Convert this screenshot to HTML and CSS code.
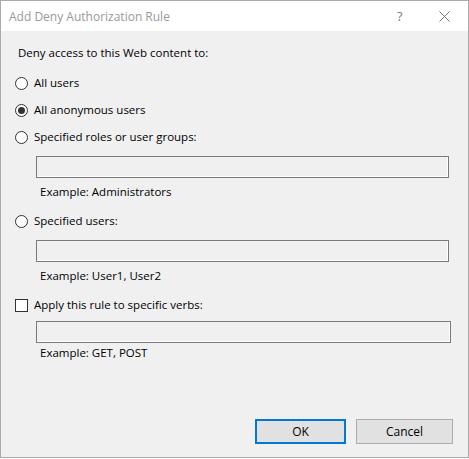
FILE: index.html
```html
<!DOCTYPE html>
<html lang="en">
<head>
    <meta charset="UTF-8">
    <title>Add Deny Authorization Rule</title>
    <link rel="stylesheet" href="styles.css">
</head>
<body>
<div class="dialog">
    <div class="titlebar">
        <span class="title">Add Deny Authorization Rule</span>
        <span class="help">?</span>
        <span class="close">
            <svg width="11" height="11" viewBox="0 0 11 11"><path d="M0.5 0.5L10.5 10.5M10.5 0.5L0.5 10.5" stroke="#777" stroke-width="1" fill="none"/></svg>
        </span>
    </div>
    <div class="content">
        <div class="intro">Deny access to this Web content to:</div>

        <label class="option first"><input type="radio" name="who"><span>All users</span></label>
        <label class="option"><input type="radio" name="who" checked><span>All anonymous users</span></label>
        <label class="option"><input type="radio" name="who"><span>Specified roles or user groups:</span></label>
        <input type="text" class="field" disabled>
        <div class="hint">Example: Administrators</div>

        <label class="option second"><input type="radio" name="who"><span>Specified users:</span></label>
        <input type="text" class="field" disabled>
        <div class="hint">Example: User1, User2</div>

        <label class="option second"><input type="checkbox" id="verbs"><span>Apply this rule to specific verbs:</span></label>
        <input type="text" class="field wide verbs" disabled>
        <div class="hint tight">Example: GET, POST</div>
    </div>
    <div class="buttons">
        <button class="btn ok">OK</button>
        <button class="btn cancel">Cancel</button>
    </div>
</div>
</body>
</html>
```

FILE: styles.css
```css
body{
    margin: 0;
    font-family: "Open Sans", "Noto Sans", sans-serif;
    font-size: 11.5px;
    color: #000;
    background: #fff;
}
.dialog{
    box-sizing: border-box;
    width: 469px;
    height: 458px;
    border: 1px solid #aaa;
    background: #f0f0f0;
    display: flex;
    flex-direction: column;
}
.titlebar{
    height: 30px;
    background: #fff;
    display: flex;
    align-items: center;
    padding-left: 8px;
    color: #999;
    font-size: 12px;
}
.title{
    flex: 1;
}
.help{
    width: 12px;
    margin-right: 30px;
    font-size: 13px;
    color: #777;
}
.close{
    width: 11px;
    height: 11px;
    margin-right: 18px;
    display: flex;
}
.content{
    padding: 14px 0 0 14px;
    display: flex;
    flex-direction: column;
    line-height: 16px;
}
.intro{
    padding-left: 3px;
}
.option{
    display: flex;
    align-items: center;
    height: 16px;
    margin-top: 11px;
}
.option.first{
    margin-top: 14px;
}
.option + .option{
    margin-top: 11px;
}
.option.second{
    margin-top: 13px;
}
.option span{
    margin-left: 6px;
}
.option input{
    appearance: none;
    margin: 0;
    width: 13px;
    height: 13px;
    border: 1px solid #333;
    background: #fff;
    box-sizing: border-box;
}
.option input[type=radio]{
    border-radius: 50%;
    display: flex;
    align-items: center;
    justify-content: center;
}
.option input[type=radio]:checked::after{
    content: "";
    width: 7px;
    height: 7px;
    border-radius: 50%;
    background: #333;
}
.field{
    box-sizing: border-box;
    width: 413px;
    height: 22px;
    margin: 11px 0 0 21px;
    border: 1px solid #7a7a7a;
    box-shadow: inset -1px -1px 0 #fff;
    background: #f0f0f0;
    padding: 0;
}
.field.wide{
    width: 415px;
}
.field.verbs{
    margin-top: 8px;
}
.hint{
    margin: 6px 0 0 25px;
}
.hint.tight{
    margin-top: 2px;
}
.buttons{
    margin-top: auto;
    padding: 0 15px 13px 0;
    display: flex;
    justify-content: flex-end;
    gap: 10px;
}
.btn{
    box-sizing: border-box;
    height: 25px;
    font-family: inherit;
    font-size: 12px;
    background: #e1e1e1;
    border: 1px solid #adadad;
    padding: 0;
    color: #000;
}
.btn.ok{
    width: 91px;
    border: 2px solid #0078d7;
}
.btn.cancel{
    width: 97px;
}
```
